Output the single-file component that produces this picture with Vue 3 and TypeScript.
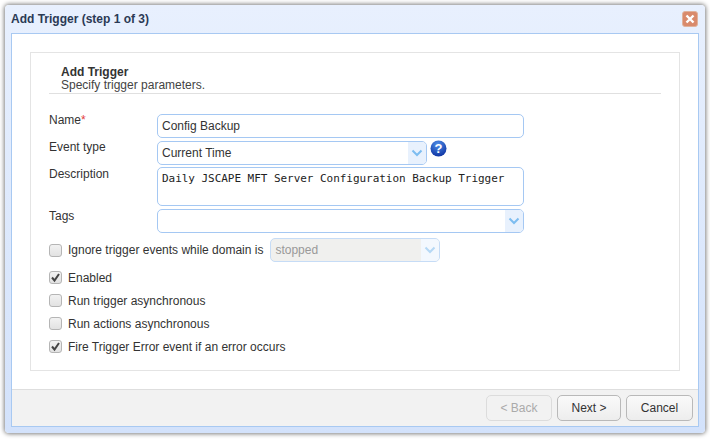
<script setup lang="ts">
const options = [
  { label: 'Enabled', checked: true },
  { label: 'Run trigger asynchronous', checked: false },
  { label: 'Run actions asynchronous', checked: false },
  { label: 'Fire Trigger Error event if an error occurs', checked: true },
]
</script>

<template>
  <div class="page">
    <div class="window">
      <div class="titlebar">
        <span class="title">Add Trigger (step 1 of 3)</span>
        <button class="close">
          <svg width="10" height="10" viewBox="0 0 10 10">
            <path d="M1.5 1.5 L8.5 8.5 M8.5 1.5 L1.5 8.5" stroke="#fff" stroke-width="2.4" />
          </svg>
        </button>
      </div>
      <div class="content">
        <div class="body">
          <div class="panel">
            <div class="heading">
              <div class="heading-title">Add Trigger</div>
              <div class="heading-sub">Specify trigger parameters.</div>
            </div>
            <div class="form">
              <label class="lbl raised">Name<span class="req">*</span></label>
              <div class="field input">Config Backup</div>

              <label class="lbl raised">Event type</label>
              <div class="event-wrap">
                <div class="field select event">
                  <span class="value">Current Time</span>
                  <span class="arrow">
                    <svg width="12" height="8" viewBox="0 0 12 8"><path d="M1.5 1.5 L6 6 L10.5 1.5" fill="none" stroke="#7dbdf0" stroke-width="2" /></svg>
                  </span>
                </div>
                <svg class="help" width="17" height="17" viewBox="0 0 17 17">
                  <defs>
                    <radialGradient id="helpFill" cx="45%" cy="25%" r="80%">
                      <stop offset="0" stop-color="#4f8fe8" />
                      <stop offset="1" stop-color="#0b2fa0" />
                    </radialGradient>
                  </defs>
                  <circle cx="8.5" cy="8.5" r="8" fill="url(#helpFill)" />
                  <text x="8.5" y="13" text-anchor="middle" class="help-q">?</text>
                </svg>
              </div>

              <label class="lbl">Description</label>
              <div class="field textarea">Daily JSCAPE MFT Server Configuration Backup Trigger</div>

              <label class="lbl">Tags</label>
              <div class="field select tags">
                <span class="value"></span>
                <span class="arrow">
                  <svg width="12" height="8" viewBox="0 0 12 8"><path d="M1.5 1.5 L6 6 L10.5 1.5" fill="none" stroke="#7dbdf0" stroke-width="2" /></svg>
                </span>
              </div>
            </div>

            <div class="ignore">
              <span class="check"></span>
              <span class="opt-label">Ignore trigger events while domain is</span>
              <div class="field select stopped">
                <span class="value">stopped</span>
                <span class="arrow">
                  <svg width="12" height="8" viewBox="0 0 12 8"><path d="M1.5 1.5 L6 6 L10.5 1.5" fill="none" stroke="#b5d8f5" stroke-width="2" /></svg>
                </span>
              </div>
            </div>

            <div class="options">
              <div v-for="opt in options" :key="opt.label" class="option">
                <span class="check">
                  <svg v-if="opt.checked" width="11" height="11" viewBox="0 0 11 11">
                    <path d="M2 5.5 L4.5 8.5 L9 2" fill="none" stroke="#444" stroke-width="2" />
                  </svg>
                </span>
                <span class="opt-label">{{ opt.label }}</span>
              </div>
            </div>
          </div>
        </div>
        <div class="footer">
          <button class="btn disabled back">&lt; Back</button>
          <button class="btn next">Next &gt;</button>
          <button class="btn cancel">Cancel</button>
        </div>
      </div>
    </div>
  </div>
</template>

<style>
html, body {
  margin: 0;
  background: #fff;
}
</style>

<style scoped>
.page {
  width: 710px;
  height: 439px;
  box-sizing: border-box;
  padding: 5px 5px 6px 5px;
  font-family: "Liberation Sans", Arial, sans-serif;
  font-size: 12px;
  color: #333;
  overflow: hidden;
}
.window {
  height: 428px;
  box-sizing: border-box;
  display: flex;
  flex-direction: column;
  background: linear-gradient(#e8f0fe, #d3e2fb);
  border-radius: 4px;
  box-shadow: 0 0 4px 1px rgba(0, 0, 0, 0.5);
  padding: 0 6px 6px 6px;
}
.titlebar {
  height: 28px;
  flex: none;
  display: flex;
  align-items: center;
  justify-content: space-between;
}
.title {
  font-weight: bold;
  color: #2b3a55;
  margin-top: -1px;
}
.close {
  width: 16px;
  height: 16px;
  padding: 0;
  margin-right: 1px;
  border: 1px solid #e0b29c;
  border-radius: 3px;
  background: #d98a6c;
  display: flex;
  align-items: center;
  justify-content: center;
}
.content {
  flex: 1;
  display: flex;
  flex-direction: column;
  border: 1px solid #a8c9f2;
  background: #fff;
  min-height: 0;
}
.body {
  flex: 1;
  padding: 18px;
  min-height: 0;
}
.panel {
  height: 319px;
  box-sizing: border-box;
  border: 1px solid #e4e4e4;
  padding: 0 18px;
}
.heading {
  height: 41px;
  box-sizing: border-box;
  padding: 13px 0 0 12px;
  border-bottom: 1px solid #e0e0e0;
  line-height: 13px;
}
.heading-title {
  font-weight: bold;
  color: #333;
}
.heading-sub {
  color: #444;
}
.form {
  display: grid;
  grid-template-columns: 108px 367px;
  grid-template-rows: 24px 23px 39px 24px;
  row-gap: 3px;
  margin-top: 20px;
}
.lbl {
  line-height: 14px;
  color: #333;
}
.raised {
  margin-top: -1px;
}
.req {
  color: #e23c3c;
}
.field {
  box-sizing: border-box;
  border: 1px solid #a5c8f3;
  border-radius: 5px;
  background: #fff;
  color: #333;
}
.input {
  line-height: 22px;
  padding-left: 4px;
}
.select {
  display: flex;
  height: 24px;
  align-items: stretch;
  overflow: hidden;
}
.value {
  flex: 1;
  line-height: 22px;
  padding-left: 4px;
}
.arrow {
  width: 18px;
  flex: none;
  background: #e8f1fd;
  display: flex;
  align-items: center;
  justify-content: center;
}
.event-wrap {
  display: flex;
  align-items: flex-start;
}
.event {
  width: 270px;
}
.help {
  margin: -1px 0 0 3px;
}
.help-q {
  font-family: "Liberation Sans", Arial, sans-serif;
  font-size: 13px;
  font-weight: bold;
  fill: #fff;
}
.textarea {
  font-family: "DejaVu Sans Mono", monospace;
  font-size: 11px;
  letter-spacing: -0.04px;
  line-height: 14px;
  padding: 4px;
  color: #222;
}
.ignore {
  display: flex;
  align-items: center;
  height: 24px;
  margin-top: 5px;
}
.stopped {
  width: 170px;
  margin-left: 7px;
  background: #f0f0ee;
  border-color: #c6dcf6;
  color: #999;
}
.stopped .arrow {
  background: #f3f8fe;
}
.options {
  margin-top: 4px;
  display: flex;
  flex-direction: column;
}
.option {
  height: 23px;
  display: flex;
  align-items: center;
}
.check {
  width: 13px;
  height: 13px;
  box-sizing: border-box;
  flex: none;
  border: 1px solid #b5b5b5;
  border-radius: 3px;
  background: linear-gradient(#f2f2f2, #e2e2e2);
  margin-right: 6px;
  display: flex;
  align-items: center;
  justify-content: center;
}
.opt-label {
  color: #333;
}
.footer {
  height: 37px;
  flex: none;
  box-sizing: border-box;
  background: #f2f2f2;
  border-top: 1px solid #dedede;
  display: flex;
  justify-content: flex-end;
  align-items: flex-start;
  padding: 5px 5px 0 0;
  gap: 5px;
}
.btn {
  height: 26px;
  box-sizing: border-box;
  padding: 0;
  border: 1px solid #b9b9b9;
  border-radius: 5px;
  background: linear-gradient(#fafafa, #ededed);
  font-family: inherit;
  font-size: 12px;
  color: #333;
}
.back {
  width: 66px;
}
.next {
  width: 64px;
}
.cancel {
  width: 67px;
}
.disabled {
  color: #aaa;
  border-color: #dcdcdc;
  background: #f2f2f2;
}
</style>
